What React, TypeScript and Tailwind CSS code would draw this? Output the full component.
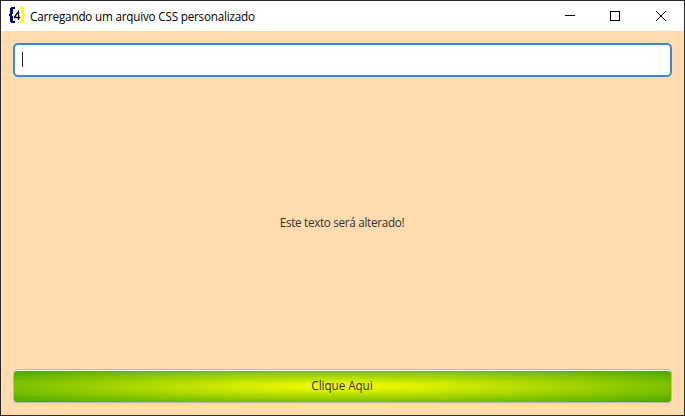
function TitleBar() {
  return (
    <header className="flex h-[30px] shrink-0 items-center bg-white text-black">
      <svg className="ml-[7px] h-[18px] w-[18px]" viewBox="0 0 18 18" fill="none">
        <g shapeRendering="crispEdges">
          <path d="M3 0H7V2H5V7H4V9H5V14H7V16H3V15H2V9H1V7H2V1H3Z" fill="#000080" />
          <path d="M2 1H5V6H2ZM2 10H5V15H2Z" fill="#000080" />
          <path d="M15 0H12V2H13V7H14V9H13V14H12V16H15V15H16V9H17V7H16V1H15Z" fill="#ffff00" />
          <path d="M13 1H16V6H13ZM13 10H16V15H13Z" fill="#ffff00" />
        </g>
        <path d="M10.5 13V4.4L6.6 9.8V10.5H12.2" stroke="#000" strokeWidth="1.3" />
      </svg>
      <h1 className="ml-[4px] whitespace-nowrap text-[11.7px] leading-[16px] tracking-[-0.2px]">
        Carregando um arquivo CSS personalizado
      </h1>
      <div className="ml-auto flex h-full">
        <button className="flex w-[46px] items-center justify-center" aria-label="Minimizar">
          <svg width="10" height="10" viewBox="0 0 10 10" shapeRendering="crispEdges">
            <rect y="4" width="10" height="1" />
          </svg>
        </button>
        <button className="flex w-[44px] items-center justify-center" aria-label="Maximizar">
          <svg width="10" height="10" viewBox="0 0 10 10" fill="none" stroke="black">
            <rect x="0.5" y="0.5" width="9" height="9" />
          </svg>
        </button>
        <button className="flex w-[47px] items-center justify-center pl-px" aria-label="Fechar">
          <svg width="10" height="10" viewBox="0 0 10 10" stroke="black">
            <path d="M0 0L10 10M10 0L0 10" />
          </svg>
        </button>
      </div>
    </header>
  );
}

export default function App() {
  return (
    <div className="flex h-[416px] w-[685px] flex-col border border-[#2b2829] bg-[#ffdcb0] font-['Open_Sans','Noto_Sans',sans-serif]">
      <TitleBar />
      <main className="flex flex-1 flex-col px-3 pt-3 pb-3">
        <div className="flex h-[34px] shrink-0 items-center rounded-[5px] border-2 border-[#3a86df] bg-white px-[7px] pb-px">
          <span className="h-[15px] w-px bg-[#222]" />
        </div>
        <div className="flex flex-1 items-center justify-center pr-px pb-[2px]">
          <p className="text-[11.7px] leading-[16px] tracking-[-0.3px] text-[#333333]">Este texto será alterado!</p>
        </div>
        <button className="flex h-[34px] shrink-0 flex-col rounded-[4px] border border-[#c1b9ac] bg-white pt-px shadow-[0_1px_1px_#eed2b0]">
          <span className="flex w-full flex-1 items-center justify-center rounded-[3px] bg-[radial-gradient(ellipse_farthest-corner_at_center,#fbff00,#48a600)] pr-px pb-[2px] text-[11.7px] tracking-[-0.05px] text-[#333333]">
            Clique Aqui
          </span>
        </button>
      </main>
    </div>
  );
}
